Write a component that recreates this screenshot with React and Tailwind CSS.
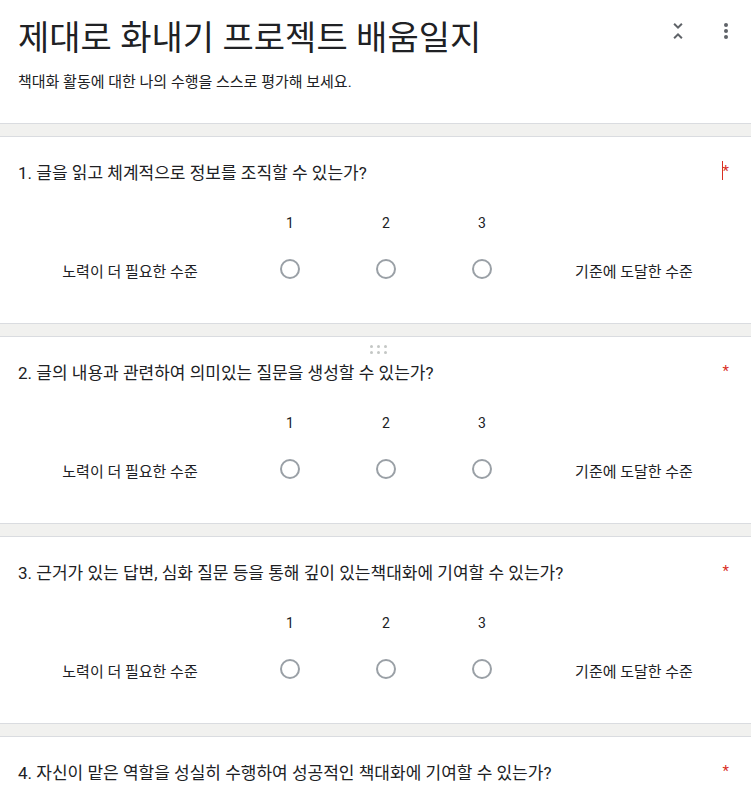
import React from "react";

const font = { fontFamily: 'Roboto, "Noto Sans CJK KR", sans-serif' };

function Band() {
  return <div className="h-[14px] border-y border-[#dadce0] bg-[#f1f1ef]" />;
}

function Radio() {
  return <div className="w-[20px] h-[20px] rounded-full border-2 border-[#9aa0a6]" />;
}

function Question({ text, handle, caret }) {
  return (
    <div className="relative bg-white h-[186px] pt-[24px] pl-[18px] pr-[22px]">
      {handle && (
        <div className="absolute left-[370px] top-[8px] grid grid-cols-3 gap-x-[4px] gap-y-[3px]">
          {[0, 1, 2, 3, 4, 5].map((i) => (
            <div key={i} className="w-[3px] h-[3px] rounded-full bg-[#c4c7c5]" />
          ))}
        </div>
      )}
      <div className="flex items-start justify-between">
        <div className="text-[17px] leading-[24px] text-[#202124]">{text}</div>
        <div className="flex items-start">
          {caret && <div className="w-[1px] h-[19px] bg-[#d93025]" />}
          <span className="text-[#d93025] text-[15px] leading-[20px]">*</span>
        </div>
      </div>
      <div className="flex mt-[26px] h-[24px] items-center">
        <div className="w-[224px] shrink-0" />
        {["1", "2", "3"].map((n) => (
          <div key={n} className="w-[96px] shrink-0 text-center text-[14px] text-[#202124]">
            {n}
          </div>
        ))}
      </div>
      <div className="flex mt-[10px] h-[48px] items-center">
        <div className="w-[224px] shrink-0 text-center text-[15px] text-[#202124] pt-[6px]">노력이 더 필요한 수준</div>
        {[0, 1, 2].map((i) => (
          <div key={i} className="w-[96px] shrink-0 flex justify-center">
            <Radio />
          </div>
        ))}
        <div className="w-[208px] shrink-0 text-center text-[15px] text-[#202124] pt-[6px]">기준에 도달한 수준</div>
      </div>
    </div>
  );
}

export default function App() {
  return (
    <div className="w-[751px] bg-white" style={font}>
      <div className="relative h-[123px] pt-[16px] pl-[18px]">
        <h1 className="text-[34px] leading-[44px] text-[#202124]">제대로 화내기 프로젝트 배움일지</h1>
        <p className="mt-[12px] text-[15px] leading-[20px] text-[#202124]">책대화 활동에 대한 나의 수행을 스스로 평가해 보세요.</p>
        <div className="absolute right-[13px] top-[19px] flex gap-[24px]">
          <svg width="24" height="24" viewBox="0 0 24 24" fill="#5f6368">
            <path d="M7.41 18.59L8.83 20 12 16.83 15.17 20l1.41-1.41L12 14l-4.59 4.59zm9.18-13.18L15.17 4 12 7.17 8.83 4 7.41 5.41 12 10l4.59-4.59z" />
          </svg>
          <svg width="24" height="24" viewBox="0 0 24 24" fill="#5f6368">
            <circle cx="12" cy="6" r="2" />
            <circle cx="12" cy="12" r="2" />
            <circle cx="12" cy="18" r="2" />
          </svg>
        </div>
      </div>
      <Band />
      <Question text="1. 글을 읽고 체계적으로 정보를 조직할 수 있는가?" caret />
      <Band />
      <Question text="2. 글의 내용과 관련하여 의미있는 질문을 생성할 수 있는가?" handle />
      <Band />
      <Question text="3. 근거가 있는 답변, 심화 질문 등을 통해 깊이 있는책대화에 기여할 수 있는가?" />
      <Band />
      <Question text="4. 자신이 맡은 역할을 성실히 수행하여 성공적인 책대화에 기여할 수 있는가?" />
    </div>
  );
}
